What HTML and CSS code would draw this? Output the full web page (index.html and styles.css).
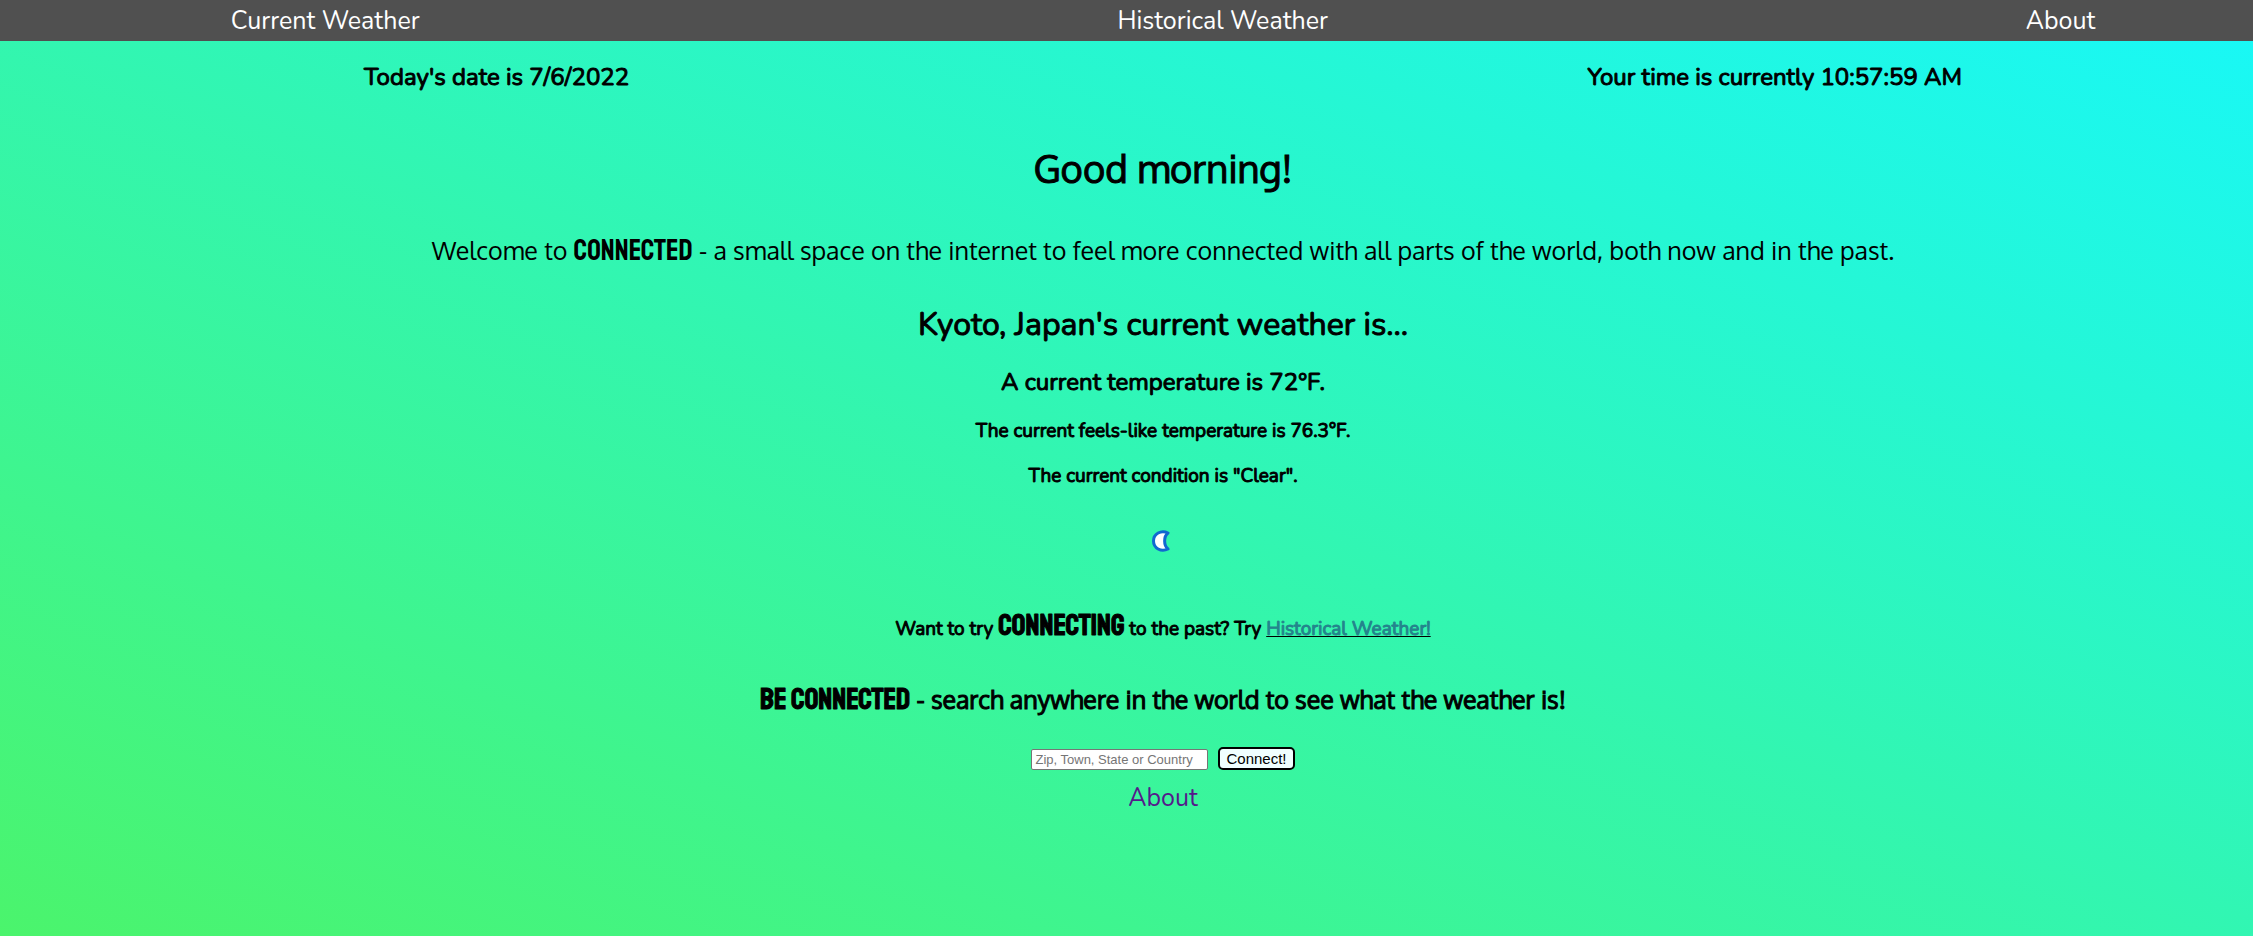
FILE: index.html
```html
<!DOCTYPE html>
<html lang="en">
<head>
<meta charset="utf-8">
<title>Connected</title>
<link rel="stylesheet" href="styles.css">
</head>
<body>
<nav class="nav">
  <a href="#current">Current Weather</a>
  <a href="#historical">Historical Weather</a>
  <a href="#about">About</a>
</nav>
<main class="page">
  <div class="clock">
    <h3 class="medium">Today's date is 7/6/2022</h3>
    <h3 class="medium">Your time is currently 10:57:59 AM</h3>
  </div>
  <h1 class="greeting">Good morning!</h1>
  <p class="welcome">Welcome to <span class="brand">CONNECTED</span> - a small space on the internet to feel more connected with all parts of the world, both now and in the past.</p>
  <section class="weather" id="current">
    <h2 class="place">Kyoto, Japan's current weather is...</h2>
    <h3 class="medium">A current temperature is 72°F.</h3>
    <h4 class="small">The current feels-like temperature is 76.3°F.</h4>
    <h4 class="small">The current condition is "Clear".</h4>
    <svg class="moon" viewBox="0 0 64 64" role="img" aria-label="Clear night">
      <path d="M37 24 C30 20.500 22.500 25 22.500 32 C22.500 39 30 43.500 37 40 C32.500 36.500 32.500 27.500 37 24 Z" fill="#fff" stroke="#1268d0" stroke-width="3" stroke-linejoin="round"/>
    </svg>
  </section>
  <h4 class="small past">Want to try <span class="brand">CONNECTING</span> to the past? Try <a class="past-link" href="#historical">Historical Weather!</a></h4>
  <h3 class="search-title"><span class="brand">BE CONNECTED</span> - search anywhere in the world to see what the weather is!</h3>
  <form class="search">
    <input class="search-box" type="text" aria-label="Location" placeholder="Zip, Town, State or Country">
    <button class="search-button" type="button">Connect!</button>
  </form>
  <a class="about" id="about" href="#about">About</a>
</main>
</body>
</html>
```
FILE: styles.css
```css
* { box-sizing: border-box; }
body {
  margin: 0;
  min-height: 100vh;
  color: #000;
  font-family: Nunito, Lato, sans-serif;
  background: linear-gradient(to top right, #4bf46c, #18f8f8);
}
h1, h2, h3, h4, p { margin: 0; font-weight: 400; }
h1, h2, h3, h4 { -webkit-text-stroke: 1px; }
.nav {
  display: flex;
  justify-content: space-between;
  padding: 5px 7% 4px calc(7% + 73px);
  background: #505050;
  font-size: 25px;
  line-height: 32px;
}
.nav a { color: #fff; text-decoration: none; }
.page {
  display: flex;
  flex-direction: column;
  align-items: center;
  padding: 20px 0 40px 73px;
  text-align: center;
}
.clock {
  align-self: stretch;
  display: flex;
  justify-content: space-between;
  padding: 0 291px;
}
.medium { font-size: 24px; line-height: 32px; }
.small { font-size: 19px; line-height: 24px; }
.greeting {
  margin-top: 51px;
  font: 400 38px/48px Oxygen, "Noto Sans", sans-serif;
}
.welcome {
  margin-top: 42px;
  font: 400 25px/32px Oxygen, "Noto Sans", sans-serif;
}
.brand {
  font-family: Staatliches, "Bebas Neue", "Liberation Sans Narrow", sans-serif;
  font-weight: 400;
  font-size: 30px;
  line-height: 24px;
}
.weather {
  display: flex;
  flex-direction: column;
  align-items: center;
  gap: 21px;
  margin-top: 39px;
}
.place { font-size: 32px; line-height: 40px; }
.moon { width: 64px; height: 64px; }
.past { margin-top: 40px; }
.past-link { color: #24848c; text-decoration-color: #000; }
.search-title {
  margin-top: 42px;
  font: 400 25px/32px Oxygen, "Noto Sans", sans-serif;
}
.search {
  display: flex;
  align-items: flex-end;
  gap: 10px;
  margin-top: 32px;
}
.search-box {
  width: 177px;
  height: 21px;
  padding: 1px 3px;
  border: 1px solid #767676;
  border-radius: 2px;
  background: #fff;
  font: 13px "Liberation Sans", sans-serif;
}
.search-box::placeholder { color: #757575; }
.search-button {
  height: 23px;
  padding: 0 6px;
  border: 2px solid #000;
  border-radius: 5px;
  background: #f0ffff;
  color: #000;
  font: 15px "Liberation Sans", sans-serif;
}
.about {
  margin-top: 12px;
  color: #551a8b;
  font-size: 25px;
  line-height: 32px;
  text-decoration: none;
}
```
